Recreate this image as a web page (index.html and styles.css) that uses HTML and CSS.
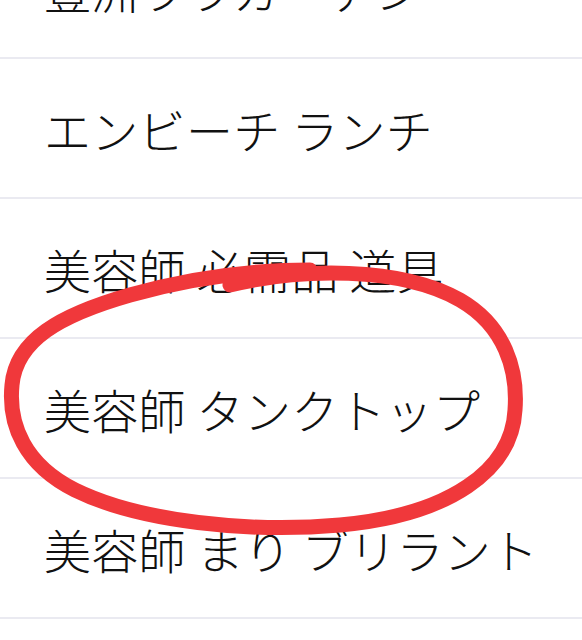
FILE: index.html
```html
<!DOCTYPE html>
<html lang="ja">
<head>
<meta charset="utf-8">
<title>検索履歴</title>
<link rel="stylesheet" href="styles.css">
</head>
<body>
<div class="screen">
  <ul class="list">
    <li class="row"><span class="label">豊洲ララガーデン</span></li>
    <li class="row"><span class="label">エンビーチ ランチ</span></li>
    <li class="row"><span class="label">美容師 必需品 道具</span></li>
    <li class="row"><span class="label">美容師 タンクトップ</span></li>
    <li class="row"><span class="label">美容師 まり ブリラント</span></li>
  </ul>
  <svg class="mark" width="582" height="640" viewBox="0 0 582 640">
    <path d="M 230 285 C 300 268, 400 266, 460 300 C 505 326, 518 370, 515 410 C 512 470, 450 515, 340 525 C 250 533, 140 522, 75 490 C 25 465, 8 425, 12 385 C 16 340, 60 315, 130 295 C 190 278, 250 270, 310 270" fill="none" stroke="#f0383b" stroke-width="15" stroke-linecap="round" stroke-linejoin="round"/>
  </svg>
</div>
</body>
</html>
```

FILE: styles.css
```css
html, body {
  margin: 0;
  padding: 0;
  background: #ffffff;
}

.screen {
  position: relative;
  width: 582px;
  height: 640px;
  overflow: hidden;
  background: #ffffff;
}

.list {
  list-style: none;
  margin: -81px 0 0 0;
  padding: 0;
}

.row {
  height: 138px;
  border-bottom: 2px solid #eaeaf1;
  display: flex;
  align-items: center;
  padding-left: 44px;
}

.label {
  font-family: "Noto Sans CJK JP", "Noto Sans", sans-serif;
  font-size: 47px;
  font-weight: 300;
  letter-spacing: 0.3px;
  color: #111111;
  line-height: 1;
  white-space: nowrap;
}

.mark {
  position: absolute;
  left: 0;
  top: 0;
  pointer-events: none;
}
```
